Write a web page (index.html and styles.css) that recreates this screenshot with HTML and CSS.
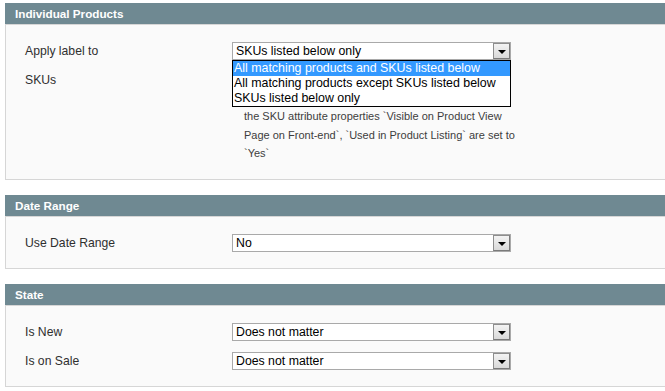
FILE: index.html
```html
<!DOCTYPE html>
<html>
<head>
<meta charset="utf-8">
<link rel="stylesheet" href="styles.css">
</head>
<body>
<div class="page">
  <div class="section">
    <div class="head">Individual Products</div>
    <div class="fieldset">
      <div class="row">
        <div class="label">Apply label to</div>
        <div class="select open">
          <span class="value">SKUs listed below only</span>
          <span class="btn"><span class="tri"></span></span>
          <div class="list">
            <div class="opt sel">All matching products and SKUs listed below</div>
            <div class="opt">All matching products except SKUs listed below</div>
            <div class="opt">SKUs listed below only</div>
          </div>
        </div>
      </div>
      <div class="row top">
        <div class="label">SKUs</div>
        <div class="field">
          <div class="input"></div>
          <div class="note">
            <span class="line">the SKU attribute properties `Visible on Product View</span>
            <span class="line">Page on Front-end`, `Used in Product Listing` are set to</span>
            <span class="line">`Yes`</span>
          </div>
        </div>
      </div>
    </div>
  </div>

  <div class="section">
    <div class="head">Date Range</div>
    <div class="fieldset">
      <div class="row">
        <div class="label">Use Date Range</div>
        <div class="select">
          <span class="value">No</span>
          <span class="btn"><span class="tri"></span></span>
        </div>
      </div>
    </div>
  </div>

  <div class="section">
    <div class="head">State</div>
    <div class="fieldset">
      <div class="row">
        <div class="label">Is New</div>
        <div class="select">
          <span class="value">Does not matter</span>
          <span class="btn"><span class="tri"></span></span>
        </div>
      </div>
      <div class="row">
        <div class="label">Is on Sale</div>
        <div class="select">
          <span class="value">Does not matter</span>
          <span class="btn"><span class="tri"></span></span>
        </div>
      </div>
    </div>
  </div>
</div>
</body>
</html>
```

FILE: styles.css
```css
html, body {
  margin: 0;
  padding: 0;
  background: #ffffff;
  overflow: hidden;
}
body {
  font-family: "Liberation Sans", Arial, sans-serif;
  font-size: 12px;
  color: #2f2f2f;
}
.page {
  padding: 3px 0 0 5px;
  width: 680px;
}
.section {
  margin-bottom: 15px;
}
.head {
  background: #6f8992;
  color: #ffffff;
  font-weight: bold;
  font-size: 11.7px;
  line-height: 21px;
  height: 21px;
  padding: 0 10px;
}
.fieldset {
  background: #fafafa;
  border: 1px solid #d6d6d6;
  padding: 17px 0 16px 19px;
  display: flex;
  flex-direction: column;
  gap: 11px;
}
.row {
  display: flex;
  align-items: center;
}
.row.top {
  align-items: flex-start;
}
.row.top .label {
  line-height: 18px;
}
.label {
  width: 207px;
  font-size: 12.2px;
  color: #2f2f2f;
}
.select {
  position: relative;
  box-sizing: border-box;
  width: 279px;
  height: 18px;
  border: 1px solid #a9a9a9;
  background: #ffffff;
  display: flex;
  align-items: center;
  justify-content: space-between;
  color: #000000;
}
.value {
  padding-left: 3px;
  line-height: 16px;
  font-size: 12.3px;
}
.btn {
  box-sizing: border-box;
  width: 17px;
  height: 16px;
  border: 1px solid #7a7a7a;
  border-top-color: #8e8e8e;
  border-left-color: #8e8e8e;
  background: linear-gradient(#f3f3f3, #d9d9d9);
  display: flex;
  align-items: center;
  justify-content: center;
}
.tri {
  width: 0;
  height: 0;
  border-left: 4px solid transparent;
  border-right: 4px solid transparent;
  border-top: 4px solid #000000;
  margin-top: 2px;
}
.list {
  position: absolute;
  left: -1px;
  top: 17px;
  width: 279px;
  box-sizing: border-box;
  border: 1px solid #000000;
  background: #ffffff;
  z-index: 5;
}
.opt {
  height: 15px;
  line-height: 15px;
  padding-left: 1px;
  font-size: 12.4px;
  color: #000000;
  white-space: nowrap;
}
.opt.sel {
  background: #3399ff;
  color: #ffffff;
}
.field {
  width: 279px;
}
.input {
  box-sizing: border-box;
  height: 18px;
  border: 1px solid #aaaaaa;
  background: #ffffff;
}
.note {
  margin-top: 1px;
  padding: 17px 0 0 12px;
  font-size: 11px;
  line-height: 18.5px;
  color: #3d3d3d;
}
.line {
  display: block;
  white-space: nowrap;
}
```
